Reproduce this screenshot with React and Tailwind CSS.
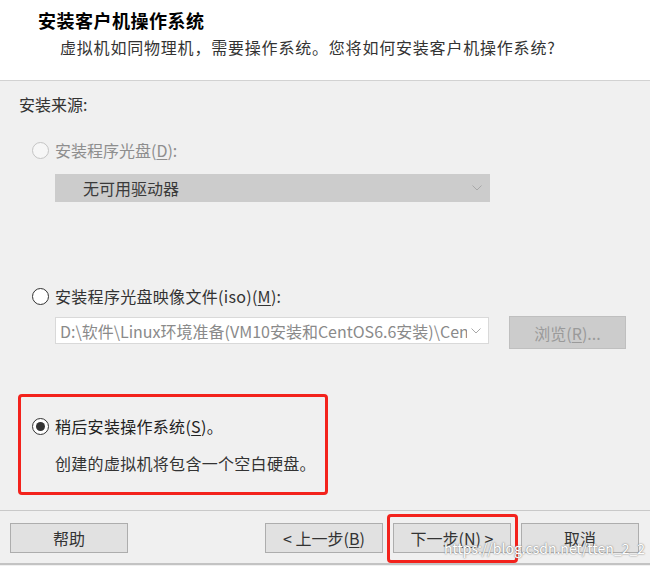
import React from 'react';

const font = { fontFamily: '"Noto Sans CJK SC", "Noto Sans", sans-serif' };

const Radio = ({ checked, disabled }) => (
  <span
    className={`w-[17px] h-[17px] rounded-full border flex items-center justify-center shrink-0 ${
      disabled ? 'border-[#c4c4c4] bg-[#f6f6f6]' : 'border-[#333333] bg-white'
    }`}
  >
    {checked && <span className="w-[9px] h-[9px] rounded-full bg-[#333333]" />}
  </span>
);

const Chevron = () => (
  <svg width="10" height="6" viewBox="0 0 10 6" className="shrink-0">
    <path d="M0.5 0.5 L5 5 L9.5 0.5" fill="none" stroke="#a8a8a8" strokeWidth="1" />
  </svg>
);

const U = ({ children }) => <span className="underline underline-offset-2">{children}</span>;

const FooterButton = ({ children, className = '' }) => (
  <div
    className={`w-[118px] h-[30px] bg-[#e1e1e1] border border-[#adadad] flex items-center justify-center text-[16px] text-[#333] ${className}`}
  >
    {children}
  </div>
);

export default function App() {
  return (
    <div className="w-[650px] h-[566px] bg-[#f0f0f0] flex flex-col overflow-hidden relative" style={font}>
      {/* Header */}
      <div className="h-[81px] bg-white border-b border-[#d2d2d2] pl-[38px] pt-[10px] shrink-0">
        <div className="text-[18px] leading-[20px] font-bold text-black tracking-[0.5px]">安装客户机操作系统</div>
        <div className="text-[16px] leading-[20px] text-[#333] mt-[7px] ml-[22px] tracking-[0.8px]">
          虚拟机如同物理机，需要操作系统。您将如何安装客户机操作系统?
        </div>
      </div>

      {/* Body */}
      <div className="px-[19px] pt-[13px] flex flex-col">
        <div className="text-[16px] leading-[20px] text-[#333]">安装来源:</div>

        <div className="flex items-center gap-[6px] ml-[13px] mt-[26px] h-[20px]">
          <Radio disabled />
          <span className="text-[16px] leading-[20px] text-[#8e8e8e]">
            安装程序光盘(<U>D</U>):
          </span>
        </div>

        <div className="ml-[36px] mt-[14px] w-[435px] h-[28px] bg-[#cccccc] flex items-center justify-between pl-[28px] pr-[8px]">
          <span className="text-[16px] text-[#3a3a3a]">无可用驱动器</span>
          <Chevron />
        </div>

        <div className="flex items-center gap-[6px] ml-[13px] mt-[84px] h-[20px]">
          <Radio />
          <span className="text-[16px] leading-[20px] text-[#333] tracking-[0.3px]">
            安装程序光盘映像文件(iso)(<U>M</U>):
          </span>
        </div>

        <div className="flex items-start ml-[36px] mt-[10px] h-[33px]">
          <div className="mt-[1px] w-[434px] h-[27px] bg-white border border-[#d9d9d9] flex items-center pl-[4px] pr-[7px] gap-[4px]">
            <span className="flex-1 overflow-hidden whitespace-nowrap text-[16px] text-[#8a8a8a]">
              D:\软件\Linux环境准备(VM10安装和CentOS6.6安装)\CentOS-6.6-x86_64-bin-DVD1.iso
            </span>
            <Chevron />
          </div>
          <div className="ml-[20px] w-[117px] h-[33px] bg-[#cccccc] border border-[#bfbfbf] flex items-center justify-center text-[16px] text-[#9a9a9a]">
            <span>
              浏览(<U>R</U>)...
            </span>
          </div>
        </div>

        <div className="-ml-[1px] mt-[45px] w-[310px] h-[101px] border-[3px] border-[#f3221c] rounded-[4px] pl-[11px] pt-[19px] flex flex-col">
          <div className="flex items-center gap-[6px] h-[20px]">
            <Radio checked />
            <span className="text-[16px] leading-[20px] text-[#222] tracking-[0.3px]">
              稍后安装操作系统(<U>S</U>)。
            </span>
          </div>
          <div className="ml-[23px] mt-[17px] text-[16px] leading-[20px] text-[#333] tracking-[0.3px]">
            创建的虚拟机将包含一个空白硬盘。
          </div>
        </div>
      </div>

      {/* Footer */}
      <div className="mt-[15px] border-t border-[#c9c9c9] pt-[12px] pl-[10px] pr-[11px] flex items-start">
        <FooterButton className="w-[117px]">帮助</FooterButton>
        <div className="flex-1" />
        <FooterButton>
          &lt; 上一步(<U>B</U>)
        </FooterButton>
        <div className="relative ml-[10px]">
          <FooterButton>
            下一步(<U>N</U>) &gt;
          </FooterButton>
          <div className="absolute -left-[6px] -top-[9px] -right-[7px] -bottom-[10px] border-[3px] border-[#f3221c] rounded-[4px]" />
        </div>
        <FooterButton className="ml-[10px]">取消</FooterButton>
      </div>
      <div className="mt-[10px] h-[2px] bg-[#c3c3c3] shrink-0" />

      <div
        className="absolute left-[444px] top-[538px] text-[14px] text-white whitespace-nowrap"
        style={{ textShadow: '0 0 2px #8a8a8a, 0 0 1px #8a8a8a' }}
      >
        https://blog.csdn.net/tten_2_2
      </div>
    </div>
  );
}
